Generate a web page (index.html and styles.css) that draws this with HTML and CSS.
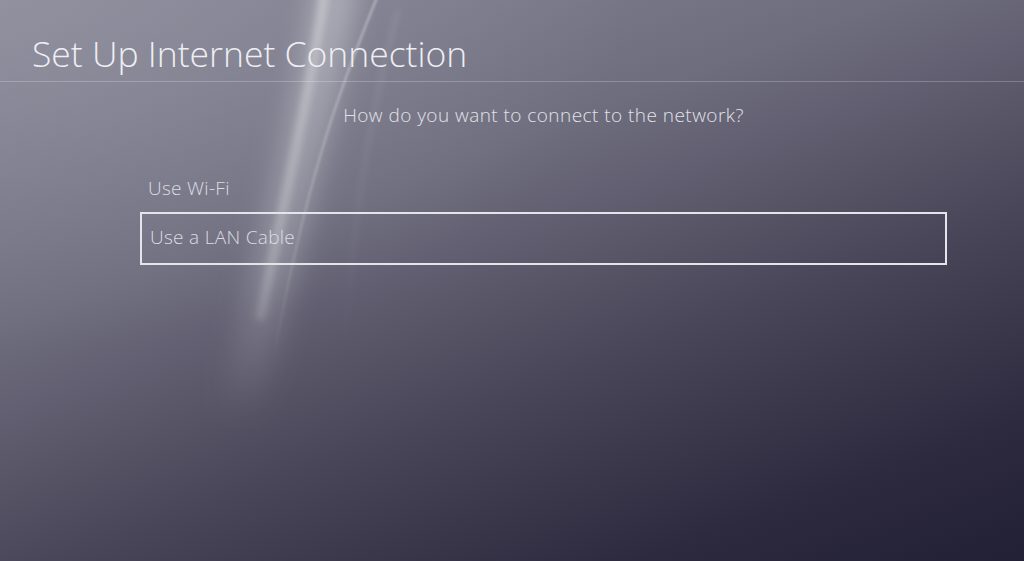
FILE: index.html
```html
<!DOCTYPE html>
<html lang="en">
<head>
    <meta charset="UTF-8">
    <meta name="viewport" content="width=device-width, initial-scale=1.0">
    <title>Set Up Internet Connection</title>
    <link rel="stylesheet" href="styles.css">
</head>
<body>
    <!-- background light streaks -->
    <svg class="streaks" width="1024" height="561" viewBox="0 0 1024 561">
        <defs>
            <filter id="blur-wide" filterUnits="userSpaceOnUse" x="-100" y="-100" width="1224" height="761"><feGaussianBlur stdDeviation="13"/></filter>
            <filter id="blur-soft" filterUnits="userSpaceOnUse" x="-100" y="-100" width="1224" height="761"><feGaussianBlur stdDeviation="3"/></filter>
            <filter id="blur-thin" filterUnits="userSpaceOnUse" x="-100" y="-100" width="1224" height="761"><feGaussianBlur stdDeviation="1"/></filter>
            <linearGradient id="fade" gradientUnits="userSpaceOnUse" x1="0" y1="0" x2="0" y2="420">
                <stop offset="0" stop-color="#fff" stop-opacity="0.3"/>
                <stop offset="0.65" stop-color="#fff" stop-opacity="0.2"/>
                <stop offset="1" stop-color="#fff" stop-opacity="0"/>
            </linearGradient>
            <linearGradient id="fade-thin" gradientUnits="userSpaceOnUse" x1="0" y1="0" x2="0" y2="360">
                <stop offset="0" stop-color="#fff" stop-opacity="0.35"/>
                <stop offset="0.7" stop-color="#fff" stop-opacity="0.14"/>
                <stop offset="1" stop-color="#fff" stop-opacity="0"/>
            </linearGradient>
        </defs>
        <path d="M338 -20 C 322 80, 290 200, 238 420" stroke="url(#fade)" stroke-width="44" fill="none" filter="url(#blur-wide)"/>
        <path d="M326 -20 C 313 80, 290 170, 260 320" stroke="url(#fade)" stroke-width="10" fill="none" filter="url(#blur-soft)"/>
        <path d="M380 -10 C 352 60, 312 150, 275 350" stroke="url(#fade-thin)" stroke-width="2.5" fill="none" filter="url(#blur-thin)"/>
        <path d="M398 10 C 372 110, 352 210, 345 360" stroke="url(#fade-thin)" stroke-width="2.5" fill="none" filter="url(#blur-soft)" opacity="0.5"/>
    </svg>

    <div class="header">
        <h1>Set Up Internet Connection</h1>
    </div>

    <div class="content">
        <p class="question">How do you want to connect to the network?</p>
        <ul class="options">
            <li class="option">Use Wi-Fi</li>
            <li class="option selected">Use a LAN Cable</li>
        </ul>
    </div>
</body>
</html>
```

FILE: styles.css
```css
html, body {
    margin: 0;
    height: 100%;
}
body {
    position: relative;
    width: 1024px;
    height: 561px;
    overflow: hidden;
    font-family: 'Open Sans', 'Liberation Sans', sans-serif;
    font-weight: 300;
    color: #e6e6ec;
    background:
        radial-gradient(ellipse 900px 500px at 0 0, rgba(150,150,165,0.55), rgba(150,150,165,0) 70%),
        linear-gradient(160deg, #8a8a99 0%, #6e6d7e 35%, #4a4659 62%, #2d2a3f 85%, #222034 100%);
}
.streaks {
    position: absolute;
    top: 0;
    left: 0;
    pointer-events: none;
}
.header {
    position: relative;
    height: 81px;
    border-bottom: 1px solid rgba(255,255,255,0.22);
}
.header h1 {
    margin: 0;
    padding: 30px 0 0 32px;
    font-size: 35.5px;
    font-weight: 300;
    line-height: 46px;
    color: #eeeef3;
}
.content {
    position: relative;
    width: 807px;
    margin-left: 140px;
}
.question {
    margin: 20px 0 0;
    text-align: center;
    font-size: 19px;
    letter-spacing: 0.45px;
    line-height: 26px;
    color: #e2e2e8;
}
.options {
    list-style: none;
    margin: 47px 0 0;
    padding: 0;
}
.option {
    box-sizing: border-box;
    height: 53px;
    padding: 0 8px;
    display: flex;
    align-items: center;
    font-size: 19px;
    letter-spacing: 0.3px;
    color: #dcdce3;
}
.option:first-child {
    height: 37px;
    align-items: flex-start;
}
.option.selected {
    border: 2.5px solid #e4e4ea;
    padding-bottom: 3px;
}
```
